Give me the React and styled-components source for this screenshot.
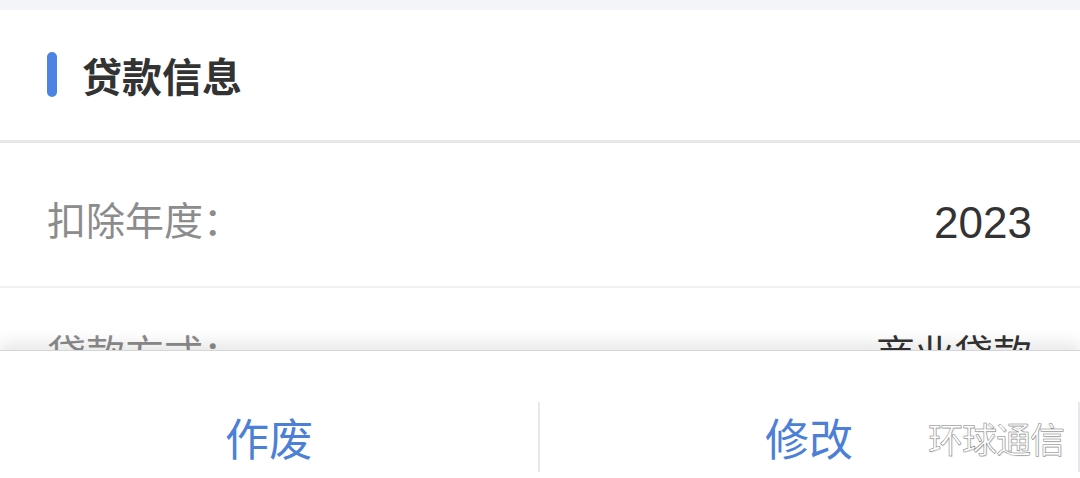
import React from "react";
import styled, { createGlobalStyle } from "styled-components";

const Global = createGlobalStyle`
  html, body { margin: 0; padding: 0; background: #ffffff; }
  body { font-family: "Noto Sans CJK SC", "Noto Sans", sans-serif; }
  * { box-sizing: border-box; }
`;

const Page = styled.div`
  position: relative;
  width: 1080px;
  height: 478px;
  display: flex;
  flex-direction: column;
  overflow: hidden;
  background: #f3f5f8;
`;

const TopStrip = styled.div`
  height: 10px;
  flex: none;
  background: #f3f5f8;
`;

const Scroll = styled.div`
  flex: 1;
  overflow: hidden;
  background: #ffffff;
  display: flex;
  flex-direction: column;
`;

const Header = styled.div`
  height: 133px;
  flex: none;
  display: flex;
  align-items: center;
  gap: 25px;
  padding: 0 47px;
  border-bottom: 3px solid #e7e7e9;
`;

const Bar = styled.span`
  width: 10px;
  height: 45px;
  border-radius: 5px;
  background: #4d83e4;
  margin-top: -2px;
`;

const Title = styled.h2`
  margin: 0;
  font-size: 40px;
  line-height: 1;
  font-weight: 700;
  color: #333333;
  margin-top: 0px;
`;

const Row = styled.div`
  flex: none;
  display: flex;
  justify-content: space-between;
  align-items: flex-start;
  padding: ${(p) => p.$top}px 48px ${(p) => p.$bottom}px 47px;
  border-bottom: 2px solid #f1f1f3;
`;

const Label = styled.span`
  font-size: 39px;
  line-height: 40px;
  color: #8c8c8c;
`;

const Value = styled.span`
  font-family: "Liberation Sans", "Noto Sans CJK SC", sans-serif;
  font-size: 44px;
  line-height: 40px;
  padding-top: 5px;
  color: #333333;
`;

const CnValue = styled.span`
  font-size: 39px;
  line-height: 40px;
  color: #333333;
`;

const Footer = styled.div`
  position: relative;
  height: 128px;
  flex: none;
  background: #ffffff;
  border-top: 1px solid #d6d6d8;
  box-shadow: 0 -8px 14px rgba(0, 0, 0, 0.09);
  padding-top: 51px;
  display: flex;
  align-items: flex-start;
`;

const Action = styled.button`
  flex: none;
  width: ${(p) => p.$w}px;
  height: 70px;
  border: none;
  background: transparent;
  padding: 0;
  font-family: "Noto Sans CJK SC", sans-serif;
  font-size: 44px;
  line-height: 1;
  color: #4c7fd6;
  display: flex;
  align-items: center;
  justify-content: center;
  border-right: 2px solid #e8e8ea;
`;

const Watermark = styled.div`
  position: absolute;
  right: 16px;
  bottom: 23px;
  font-size: 35px;
  line-height: 1;
  letter-spacing: -1px;
  color: #ffffff;
  -webkit-text-stroke: 0.5px #7a7a7a;
  text-shadow: 1px 1px 0 rgba(0, 0, 0, 0.12);
  pointer-events: none;
`;

export default function App() {
  return (
    <>
      <Global />
      <Page>
        <TopStrip />
        <Scroll>
          <Header>
            <Bar />
            <Title>贷款信息</Title>
          </Header>
          <Row $top={55} $bottom={43}>
            <Label>扣除年度：</Label>
            <Value>2023</Value>
          </Row>
          <Row $top={43} $bottom={43}>
            <Label>贷款方式：</Label>
            <CnValue>商业贷款</CnValue>
          </Row>
        </Scroll>
        <Footer>
          <Action $w={540}>作废</Action>
          <Action $w={540}>修改</Action>
          <Watermark>环球通信</Watermark>
        </Footer>
      </Page>
    </>
  );
}
